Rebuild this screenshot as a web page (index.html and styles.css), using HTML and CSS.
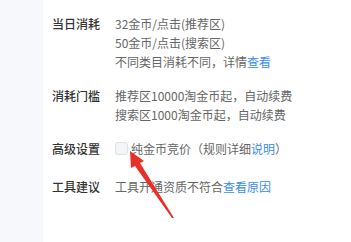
FILE: index.html
```html
<!DOCTYPE html>
<html lang="zh-CN">
<head>
    <meta charset="UTF-8">
    <title>工具设置</title>
    <link rel="stylesheet" href="styles.css">
</head>
<body>
    <div class="page">
        <div class="side"></div>
        <div class="content">
            <!-- 当日消耗 -->
            <div class="row">
                <div class="label">当日消耗</div>
                <div class="value">
                    <p>32金币/点击(推荐区)</p>
                    <p>50金币/点击(搜索区)</p>
                    <p>不同类目消耗不同，详情<a href="#">查看</a></p>
                </div>
            </div>
            <!-- 消耗门槛 -->
            <div class="row">
                <div class="label">消耗门槛</div>
                <div class="value">
                    <p>推荐区10000淘金币起，自动续费</p>
                    <p>搜索区1000淘金币起，自动续费</p>
                </div>
            </div>
            <!-- 高级设置 -->
            <div class="row row-setting">
                <div class="label">高级设置</div>
                <div class="value">
                    <label class="check"><span class="box"></span>纯金币竞价（规则详细<a href="#">说明</a>）</label>
                </div>
            </div>
            <!-- 工具建议 -->
            <div class="row">
                <div class="label">工具建议</div>
                <div class="value">
                    <p>工具开通资质不符合<a href="#">查看原因</a></p>
                </div>
            </div>
        </div>
        <svg class="arrow" width="351" height="242" viewBox="0 0 351 242">
            <polygon points="130,151 144,161 140,163 174,218 172,218 135,166 131,168" fill="#e8302a"/>
        </svg>
    </div>
</body>
</html>
```

FILE: styles.css
```css
* {
    margin: 0;
    padding: 0;
    box-sizing: border-box;
}

body {
    font-family: "Noto Sans CJK SC", "Noto Sans", sans-serif;
    font-size: 12px;
    background: #fff;
    width: 351px;
    height: 242px;
    overflow: hidden;
}

.page {
    position: relative;
    display: flex;
    height: 242px;
}

.side {
    width: 43px;
    background: #f7f8fb;
}

.content {
    flex: 1;
    padding: 14px 0 0 9px;
}

.row {
    display: flex;
    margin-bottom: 15px;
    line-height: 19px;
}

.row-setting {
    margin-bottom: 19px;
}

.label {
    width: 63px;
    color: #333;
    font-weight: 500;
}

.value {
    color: #666;
}

.value a {
    color: #3a8ee6;
    text-decoration: none;
}

.check {
    display: flex;
    align-items: center;
}

.box {
    width: 13px;
    height: 13px;
    border: 1px solid #dfe1e6;
    border-radius: 3px;
    background: #f4f5f8;
    margin-right: 3px;
}

.arrow {
    position: absolute;
    left: 0;
    top: 0;
}
```
